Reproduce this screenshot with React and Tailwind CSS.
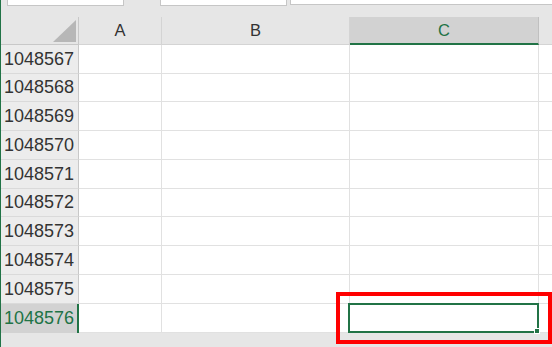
import React from "react";

const rows = [
  { n: "1048567", h: "h-[29px]" },
  { n: "1048568", h: "h-[28px]" },
  { n: "1048569", h: "h-[29px]" },
  { n: "1048570", h: "h-[29px]" },
  { n: "1048571", h: "h-[29px]" },
  { n: "1048572", h: "h-[28px]" },
  { n: "1048573", h: "h-[29px]" },
  { n: "1048574", h: "h-[29px]" },
  { n: "1048575", h: "h-[29px]" },
  { n: "1048576", h: "h-[29px]", active: true },
];

const cols = "grid grid-cols-[78px_83px_188px_189px_1fr]";

export default function App() {
  return (
    <div
      className="relative w-[552px] h-[347px] overflow-hidden flex bg-[#e6e6e6]"
      style={{ fontFamily: '"Liberation Sans", Arial, sans-serif' }}
    >
      {/* window edge */}
      <div className="w-[1px] h-full bg-[#217346] shrink-0" />

      <div className="flex-1 flex flex-col">
        {/* formula bar remnants */}
        <div className="h-[17px] flex items-start bg-[#e6e6e6]">
          <div className="ml-[6px] w-[117px] h-[6px] bg-white border border-t-0 border-[#c6c6c6]" />
          <div className="ml-[36px] w-[127px] h-[6px] bg-white border border-t-0 border-[#c6c6c6]" />
          <div className="ml-[3px] flex-1 h-[5px] bg-white border-b border-l border-[#c6c6c6]" />
        </div>

        {/* column headers */}
        <div className={`${cols} h-[28px] bg-[#e6e6e6]`}>
          <div className="relative border-r border-b border-[#c8c8c8]">
            <svg className="absolute right-[2px] bottom-[2px]" width="23" height="22" viewBox="0 0 23 22">
              <polygon points="23,0 23,22 0,22" fill="#b7b7b7" />
            </svg>
          </div>
          <div className="flex items-center justify-center border-r border-b border-[#d4d4d4] text-[16.5px] text-[#333]">
            A
          </div>
          <div className="flex items-center justify-center border-r border-b border-[#d4d4d4] text-[16.5px] text-[#333]">
            B
          </div>
          <div className="flex items-center justify-center bg-[#d2d2d2] border-r border-[#c0c0c0] border-b-2 border-b-[#217346] text-[16.5px] text-[#217346]">
            C
          </div>
          <div className="border-b border-[#d4d4d4]" />
        </div>

        {/* rows */}
        {rows.map((r) => (
          <div key={r.n} className={`${cols} ${r.h}`}>
            {r.active ? (
              <div className="flex items-center pl-[3px] bg-[#d2d2d2] border-r-2 border-[#217346] text-[18px] text-[#217346]">
                {r.n}
              </div>
            ) : (
              <div className="flex items-center pl-[3px] bg-[#ececec] border-r border-b border-[#c8c8c8] border-b-[#dadada] text-[18px] text-[#333]">
                {r.n}
              </div>
            )}
            <div className="bg-white border-r border-b border-[#e1e1e1]" />
            <div className="bg-white border-r border-b border-[#e1e1e1]" />
            <div className="relative bg-white border-r border-b border-[#e1e1e1]">
              {r.active && (
                <div className="absolute -left-[2px] -top-[1px] -right-[1px] bottom-[-1px] border-2 border-[#217346]">
                  <div className="absolute -right-[3px] -bottom-[3px] w-[6px] h-[6px] bg-[#217346] border border-white" />
                </div>
              )}
            </div>
            <div className="bg-white border-b border-[#e1e1e1]" />
          </div>
        ))}

        {/* bottom strip */}
        <div className="flex-1 bg-[#e6e6e6]" />
      </div>

      {/* annotation */}
      <div className="absolute left-[336px] top-[292px] w-[216px] h-[52px] border-4 border-[#ff0000]" />
    </div>
  );
}
